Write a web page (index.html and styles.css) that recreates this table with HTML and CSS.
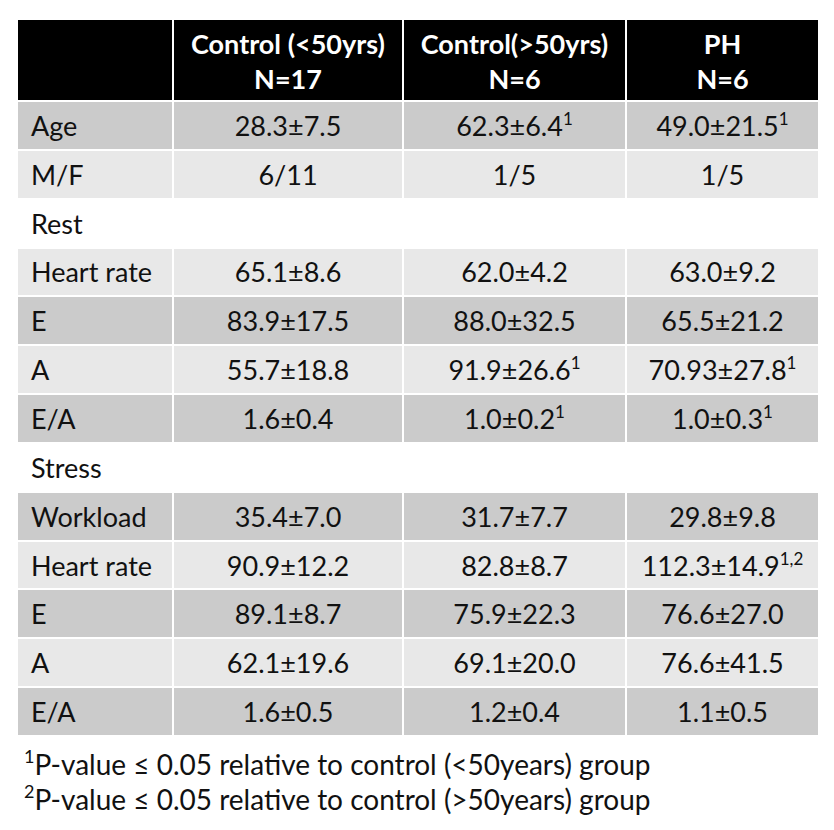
FILE: index.html
```html
<!DOCTYPE html>
<html>
<head>
<meta charset="utf-8">
<link rel="stylesheet" href="styles.css">
</head>
<body>
<table class="data">
  <colgroup>
    <col class="c1"><col class="c2"><col class="c3"><col class="c4">
  </colgroup>
  <thead>
    <tr class="head">
      <th></th>
      <th>Control (&lt;50yrs)<br>N=17</th>
      <th>Control(&gt;50yrs)<br>N=6</th>
      <th>PH<br>N=6</th>
    </tr>
  </thead>
  <tbody>
    <tr class="dark"><td>Age</td><td>28.3±7.5</td><td>62.3±6.4<sup>1</sup></td><td>49.0±21.5<sup>1</sup></td></tr>
    <tr class="light"><td>M/F</td><td>6/11</td><td>1/5</td><td>1/5</td></tr>
    <tr class="section"><td colspan="4">Rest</td></tr>
    <tr class="light"><td>Heart rate</td><td>65.1±8.6</td><td>62.0±4.2</td><td>63.0±9.2</td></tr>
    <tr class="dark"><td>E</td><td>83.9±17.5</td><td>88.0±32.5</td><td>65.5±21.2</td></tr>
    <tr class="light"><td>A</td><td>55.7±18.8</td><td>91.9±26.6<sup>1</sup></td><td>70.93±27.8<sup>1</sup></td></tr>
    <tr class="dark"><td>E/A</td><td>1.6±0.4</td><td>1.0±0.2<sup>1</sup></td><td>1.0±0.3<sup>1</sup></td></tr>
    <tr class="section"><td colspan="4">Stress</td></tr>
    <tr class="dark"><td>Workload</td><td>35.4±7.0</td><td>31.7±7.7</td><td>29.8±9.8</td></tr>
    <tr class="light"><td>Heart rate</td><td>90.9±12.2</td><td>82.8±8.7</td><td>112.3±14.9<sup>1,2</sup></td></tr>
    <tr class="dark"><td>E</td><td>89.1±8.7</td><td>75.9±22.3</td><td>76.6±27.0</td></tr>
    <tr class="light"><td>A</td><td>62.1±19.6</td><td>69.1±20.0</td><td>76.6±41.5</td></tr>
    <tr class="dark"><td>E/A</td><td>1.6±0.5</td><td>1.2±0.4</td><td>1.1±0.5</td></tr>
  </tbody>
</table>
<div class="notes">
  <p><sup>1</sup>P-value ≤ 0.05 relative to control (&lt;50years) group</p>
  <p><sup>2</sup>P-value ≤ 0.05 relative to control (&gt;50years) group</p>
</div>
</body>
</html>
```
FILE: styles.css
```css
html, body {
  margin: 0;
  padding: 0;
  background: #fff;
}
body {
  padding: 18px 0 0 16px;
  font-family: "Lato", "Liberation Sans", sans-serif;
  color: #111;
  font-size: 27px;
}
.data {
  border-collapse: separate;
  border-spacing: 2px;
  table-layout: fixed;
  width: 804px;
}
.c1 { width: 154px; }
.c2 { width: 228px; }
.c3 { width: 221px; }
.c4 { width: 191px; }
.data th, .data td {
  padding: 0;
  text-align: center;
  vertical-align: middle;
  line-height: 1;
}
.head th {
  background: #000;
  color: #fff;
  font-weight: bold;
  height: 78px;
  line-height: 35px;
  padding-top: 2px;
}
.data td:first-child {
  text-align: left;
  padding-left: 13px;
}
.data tbody tr td { height: 46.85px; }
.dark td { background: #cbcbcb; }
.light td { background: #e8e8e8; }
.section td { background: #fff; }
.data sup {
  font-size: 17px;
  vertical-align: 11px;
  line-height: 0;
}
.notes {
  margin-top: 10px;
  padding-left: 8px;
  font-size: 28px;
}
.notes p {
  margin: 0;
  line-height: 35px;
}
.notes sup {
  font-size: 18px;
  vertical-align: 12px;
  line-height: 0;
}
```
